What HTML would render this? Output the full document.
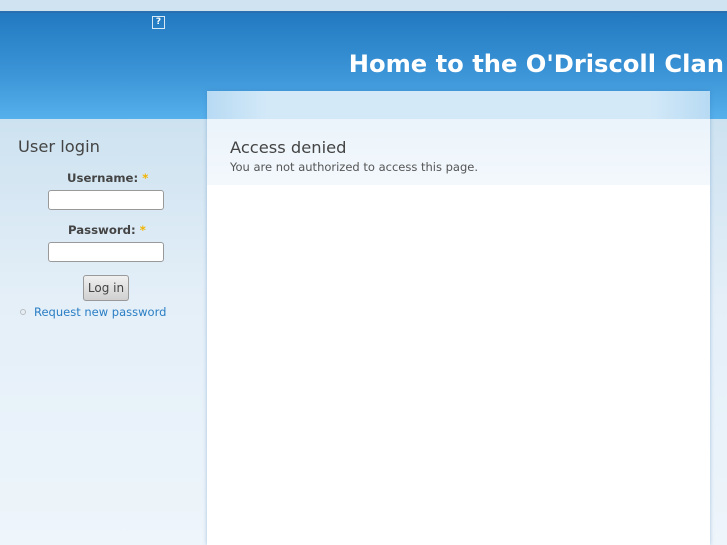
<!DOCTYPE html>
<html style="overflow:hidden;height:545px"><head><style>
*{margin:0;padding:0;box-sizing:border-box}
body{width:727px;height:545px;overflow:hidden;font-family:"DejaVu Sans",sans-serif;background:linear-gradient(#cde2f0 119px,#e4eff8 300px,#eef5fb 545px);position:relative}
.top{position:absolute;left:0;top:0;width:727px;height:11px;background:#cfe3f0}
.line{position:absolute;left:0;top:11px;width:727px;height:2px;background:#2a6fb0}
.head{position:absolute;left:0;top:13px;width:727px;height:106px;background:linear-gradient(#2279c0,#3d96d8 60%,#55b0eb)}
.q{position:absolute;left:152px;top:16px;width:13px;height:13px;border:1px solid #d8e8f5;color:#fff;font-size:9px;font-weight:bold;text-align:center;line-height:11px}
.title{position:absolute;right:3px;top:50px;color:#fff;font-size:24.2px;font-weight:bold;white-space:nowrap}
.main{position:absolute;left:207px;top:91px;width:503px;height:454px;background:#fff;box-shadow:0 0 4px rgba(60,120,180,.4)}
.mtop{height:28px;background:linear-gradient(90deg,#b7daf3,#d3e9f8 12%,#d3e9f8 88%,#b7daf3)}
.mhead{height:66px;background:linear-gradient(#ebf4fb,#f3f8fc)}
h2{position:absolute;left:23px;top:47px;font-size:16.3px;font-weight:normal;color:#444}
.msg{position:absolute;left:23px;top:69px;font-size:11.5px;color:#555}
.ul{position:absolute;left:18px;top:137px;font-size:16.3px;color:#444}
label{position:absolute;font-size:11.7px;font-weight:bold;color:#444}
label span{color:#f3b400}
.in{position:absolute;left:48px;width:116px;height:20px;background:#fff;border:1px solid #999;border-radius:3px}
.btn{position:absolute;left:83px;top:275px;width:46px;height:26px;border:1px solid #999;border-radius:3px;background:linear-gradient(#f0f0f0,#d0d0d0);font-size:12px;color:#444;text-align:center;line-height:24px}
.link{position:absolute;left:34px;top:305px;font-size:11.5px;color:#2a7ec4}
.dot{position:absolute;left:20px;top:309px;width:6px;height:6px;border:1px solid #bbb;border-radius:50%}
</style></head><body>
<div class="top"></div><div class="line"></div><div class="head"></div>
<div class="q">?</div>
<div class="title">Home to the O'Driscoll Clan</div>
<div class="main"><div class="mtop"></div><div class="mhead"></div>
<h2>Access denied</h2><div class="msg">You are not authorized to access this page.</div></div>
<div class="ul">User login</div>
<label style="left:67px;top:171px">Username: <span>*</span></label>
<div class="in" style="top:190px"></div>
<label style="left:68px;top:223px">Password: <span>*</span></label>
<div class="in" style="top:242px"></div>
<div class="btn">Log in</div>
<div class="dot"></div><div class="link">Request new password</div>
</body></html>
